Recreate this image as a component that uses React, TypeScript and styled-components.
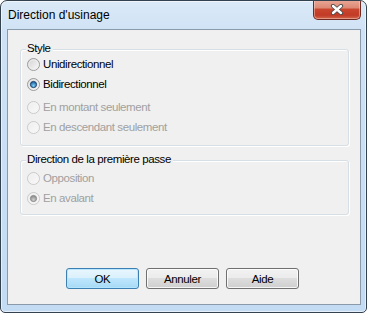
import React, { useId } from "react";
import styled, { createGlobalStyle } from "styled-components";

const Global = createGlobalStyle`
  html, body { margin: 0; padding: 0; background: #ffffff; }
  * { box-sizing: border-box; }
`;

const Window = styled.div`
  width: 367px;
  height: 313px;
  border: 1px solid #34424f;
  border-radius: 7px 7px 5px 5px;
  background: linear-gradient(180deg, #dbe9f7 0%, #cfe2f5 10%, #c3dbf3 100%);
  box-shadow: inset 0 0 0 1px rgba(255, 255, 255, 0.55);
  display: flex;
  flex-direction: column;
  overflow: hidden;
  font-family: "Liberation Sans", Arial, sans-serif;
`;

const TitleBar = styled.div`
  height: 28px;
  flex: none;
  display: flex;
  justify-content: space-between;
  align-items: flex-start;
  padding: 0 5px 0 7px;
`;

const Title = styled.div`
  font-size: 12px;
  line-height: 15px;
  margin-top: 7px;
  color: #000;
`;

const CloseButton = styled.div`
  width: 48px;
  height: 20px;
  margin-top: -1px;
  border: 1px solid #6f2a22;
  border-top: none;
  border-radius: 0 0 5px 5px;
  background: linear-gradient(
    180deg,
    #e9a997 0%,
    #dd8a76 40%,
    #c9452d 50%,
    #c13b26 80%,
    #d2664c 100%
  );
  box-shadow: inset 0 0 0 1px rgba(255, 220, 210, 0.45);
  display: flex;
  align-items: center;
  justify-content: center;
`;

const Client = styled.div`
  flex: 1;
  margin: 0 5px 7px 6px;
  border: 1px solid #8a9aab;
  background: #f0f0f0;
  display: flex;
  flex-direction: column;
  padding: 19px 11px 15px 12px;
  font-size: 11.5px;
  letter-spacing: -0.4px;
`;

const GroupBox = styled.div<{ $top: number; $padTop: number; $padBottom: number }>`
  position: relative;
  margin-top: ${(p) => p.$top}px;
  border: 1px solid #d5dfe5;
  border-radius: 3px;
  box-shadow: inset 1px 1px 0 #ffffff, 1px 1px 0 #ffffff;
  padding: ${(p) => p.$padTop}px 6px ${(p) => p.$padBottom}px 6px;
  display: flex;
  flex-direction: column;
`;

const GroupTitle = styled.span`
  position: absolute;
  top: -9px;
  left: 5px;
  padding: 0 2px 0 1px;
  line-height: 15px;
  background: #f0f0f0;
  color: #000;
`;

const RadioRow = styled.label<{ $disabled?: boolean; $extra?: number }>`
  height: 20px;
  margin-top: ${(p) => p.$extra ?? 0}px;
  display: flex;
  align-items: center;
  gap: 3px;
  color: ${(p) => (p.$disabled ? "#a0a0a0" : "#000")};
  line-height: 15px;
  cursor: default;
`;

const ButtonRow = styled.div`
  margin-top: auto;
  display: flex;
  gap: 7px;
  padding-left: 46px;
`;

const PushButton = styled.button<{ $default?: boolean }>`
  width: 73px;
  height: 21px;
  padding: 0;
  font-family: "Liberation Sans", Arial, sans-serif;
  font-size: 11.5px;
  letter-spacing: -0.4px;
  color: #000;
  border-radius: 3px;
  border: 1px solid ${(p) => (p.$default ? "#3c7fb1" : "#707070")};
  background: ${(p) =>
    p.$default
      ? "linear-gradient(180deg, #eaf6fd 0%, #d9f0fc 49%, #bee6fd 50%, #a7d9f5 100%)"
      : "linear-gradient(180deg, #f2f2f2 0%, #ebebeb 49%, #dddddd 50%, #cfcfcf 100%)"};
  box-shadow: inset 0 0 0 1px
    ${(p) => (p.$default ? "rgba(180, 230, 255, 0.9)" : "rgba(255, 255, 255, 0.8)")};
`;

function RadioMark({ checked, disabled }: { checked?: boolean; disabled?: boolean }) {
  const id = useId().replace(/:/g, "");
  const ring = disabled ? "#c9c9c9" : "#999a9a";
  return (
    <svg width="13" height="13" viewBox="0 0 13 13" style={{ flex: "none" }}>
      <defs>
        <linearGradient id={`f${id}`} x1="0" y1="0" x2="1" y2="1">
          <stop offset="0" stopColor={disabled ? "#ececec" : "#cfcfcf"} />
          <stop offset="1" stopColor={disabled ? "#fafafa" : "#fdfdfd"} />
        </linearGradient>
        <radialGradient id={`d${id}`} cx="0.5" cy="0.7" r="0.6">
          <stop offset="0" stopColor={disabled ? "#d0d0d0" : "#7fd3fb"} />
          <stop offset="1" stopColor={disabled ? "#8c8c8c" : "#1f64a6"} />
        </radialGradient>
      </defs>
      <circle cx="6.5" cy="6.5" r="6" fill={`url(#f${id})`} stroke={ring} strokeWidth="1" />
      <circle cx="6.5" cy="6.5" r="4.6" fill="none" stroke={disabled ? "#f4f4f4" : "#eeeeee"} strokeWidth="1" />
      {checked && (
        <circle
          cx="6.5"
          cy="6.5"
          r="3.1"
          fill={`url(#d${id})`}
          stroke={disabled ? "#8a8a8a" : "#1b3b5c"}
          strokeWidth="0.9"
        />
      )}
    </svg>
  );
}

function Radio({
  label,
  checked,
  disabled,
  extra,
}: {
  label: string;
  checked?: boolean;
  disabled?: boolean;
  extra?: number;
}) {
  return (
    <RadioRow $disabled={disabled} $extra={extra}>
      <RadioMark checked={checked} disabled={disabled} />
      <span>{label}</span>
    </RadioRow>
  );
}

function CloseGlyph() {
  const d = "M3 2 L11 9 M11 2 L3 9";
  return (
    <svg width="14" height="11" viewBox="0 0 14 11">
      <path d={d} stroke="#4a4a4a" strokeWidth="4.2" strokeLinecap="round" fill="none" />
      <path d={d} stroke="#ffffff" strokeWidth="2.4" strokeLinecap="round" fill="none" />
    </svg>
  );
}

export default function App() {
  return (
    <>
      <Global />
      <Window>
        <TitleBar>
          <Title>Direction d'usinage</Title>
          <CloseButton>
            <CloseGlyph />
          </CloseButton>
        </TitleBar>
        <Client>
          <GroupBox $top={0} $padTop={4} $padBottom={8}>
            <GroupTitle>Style</GroupTitle>
            <Radio label="Unidirectionnel" />
            <Radio label="Bidirectionnel" checked />
            <Radio label="En montant seulement" disabled extra={3} />
            <Radio label="En descendant seulement" disabled />
          </GroupBox>
          <GroupBox $top={14} $padTop={7} $padBottom={6}>
            <GroupTitle>Direction de la première passe</GroupTitle>
            <Radio label="Opposition" disabled />
            <Radio label="En avalant" checked disabled />
          </GroupBox>
          <ButtonRow>
            <PushButton $default>OK</PushButton>
            <PushButton>Annuler</PushButton>
            <PushButton>Aide</PushButton>
          </ButtonRow>
        </Client>
      </Window>
    </>
  );
}
